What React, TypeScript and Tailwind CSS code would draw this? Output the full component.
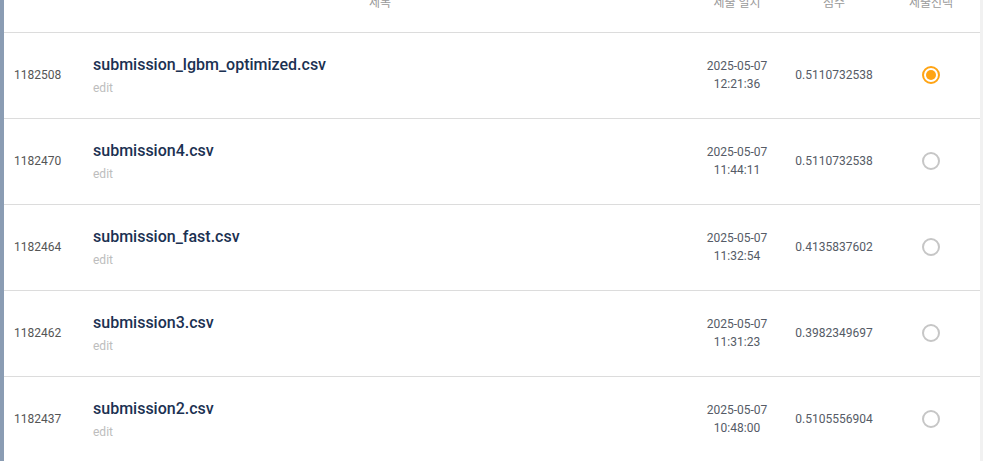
import React from "react";

const rows = [
  { id: "1182508", name: "submission_lgbm_optimized.csv", date: "2025-05-07", time: "12:21:36", score: "0.5110732538", sel: true },
  { id: "1182470", name: "submission4.csv", date: "2025-05-07", time: "11:44:11", score: "0.5110732538", sel: false },
  { id: "1182464", name: "submission_fast.csv", date: "2025-05-07", time: "11:32:54", score: "0.4135837602", sel: false },
  { id: "1182462", name: "submission3.csv", date: "2025-05-07", time: "11:31:23", score: "0.3982349697", sel: false },
  { id: "1182437", name: "submission2.csv", date: "2025-05-07", time: "10:48:00", score: "0.5105556904", sel: false },
];

function Radio({ on }: { on: boolean }) {
  return on ? (
    <span className="flex h-[18px] w-[18px] items-center justify-center rounded-full border-2 border-[#ffa414]">
      <span className="h-[10px] w-[10px] rounded-full bg-[#ffa414]" />
    </span>
  ) : (
    <span className="h-[18px] w-[18px] rounded-full border-2 border-[#c6c6c6]" />
  );
}

export default function App() {
  return (
    <div
      className="flex h-[461px] w-[983px] overflow-hidden bg-white"
      style={{ fontFamily: "Roboto, 'Noto Sans CJK KR', sans-serif" }}
    >
      <div className="w-[4px] shrink-0 bg-[#8a9cb3]" />
      <div className="w-[976px] shrink-0">
        <div className="-mt-[20px] flex h-[53px] border-b border-[#dcdcdc] pt-[16px] text-[12px] leading-[14px] text-[#9a9a9a]">
          <div className="w-[76px]" />
          <div className="w-[600px] text-center">제목</div>
          <div className="w-[114px] text-center">제출 일시</div>
          <div className="w-[80px] text-center">점수</div>
          <div className="w-[106px] pl-[8px] text-center">제출선택</div>
        </div>
        {rows.map((r) => (
          <div key={r.id} className="flex h-[86px] items-center border-b border-[#dcdcdc] pb-[2px]">
            <div className="w-[76px] pl-[10px] text-[12px] text-[#555]">{r.id}</div>
            <div className="flex w-[600px] flex-col pl-[13px]">
              <div className="text-[16px] font-medium leading-[20px] text-[#1b3152]">{r.name}</div>
              <div className="mt-[6px] text-[12px] leading-[14px] text-[#bdbdbd]">edit</div>
            </div>
            <div className="w-[114px] text-center text-[12px] leading-[18px] text-[#555b66]">
              <div>{r.date}</div>
              <div>{r.time}</div>
            </div>
            <div className="w-[80px] text-center text-[12px] text-[#555b66]">{r.score}</div>
            <div className="flex w-[106px] justify-center pl-[8px]">
              <Radio on={r.sel} />
            </div>
          </div>
        ))}
      </div>
      <div className="w-[3px] shrink-0 bg-[#f1f1f1]" />
    </div>
  );
}
